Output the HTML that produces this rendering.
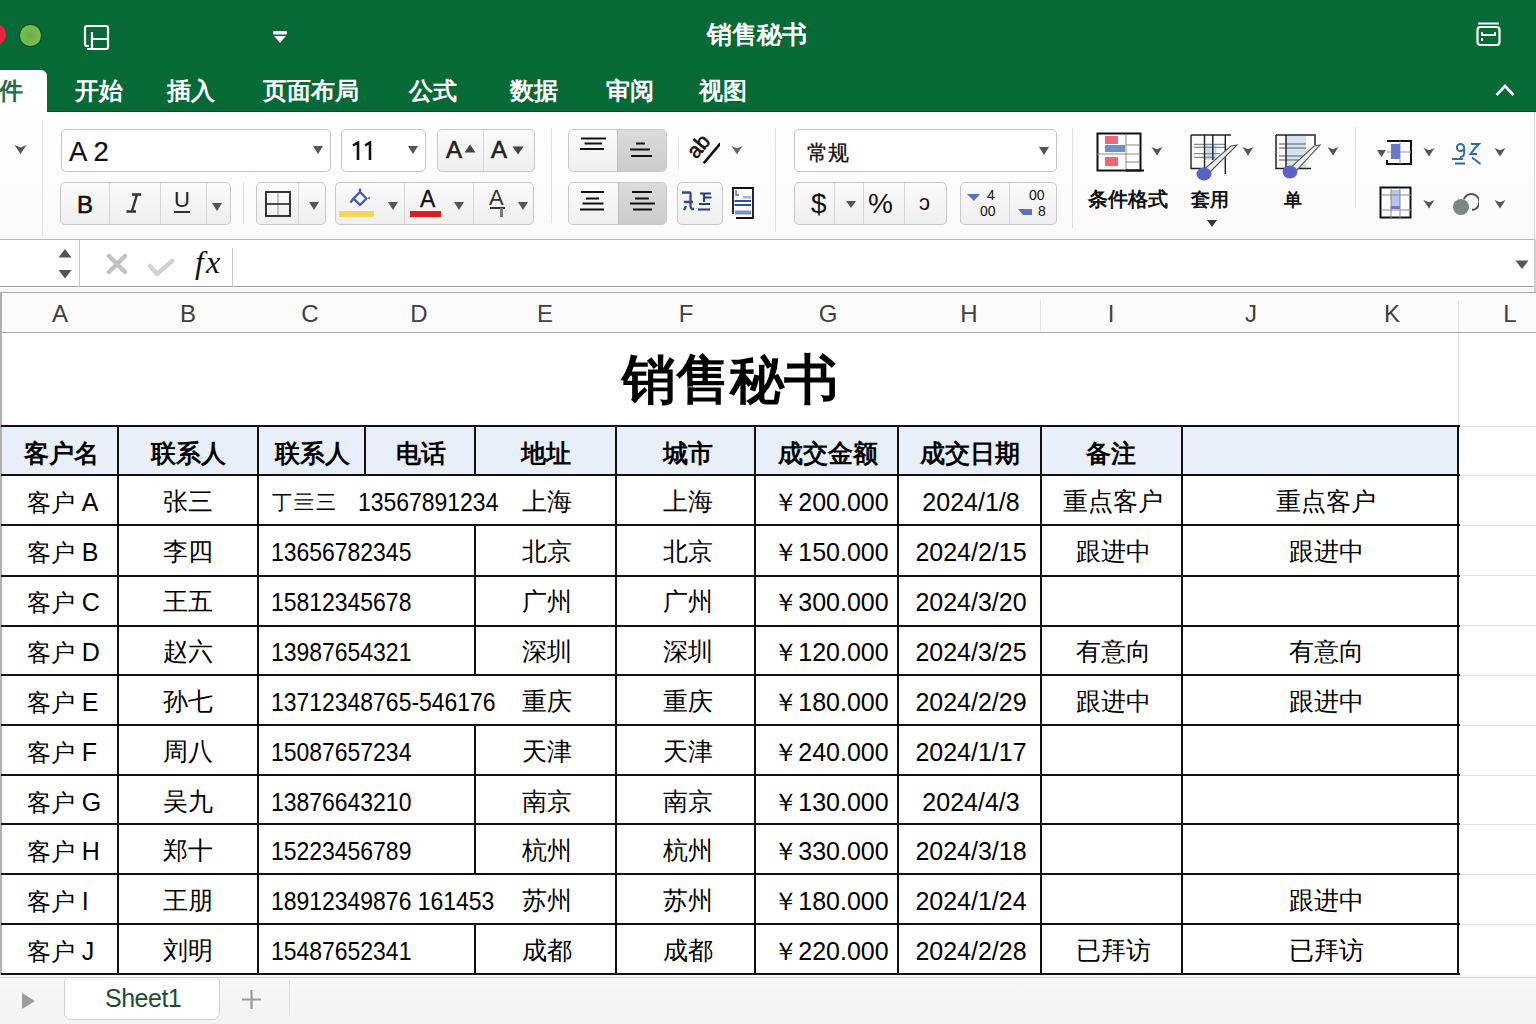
<!DOCTYPE html>
<html><head><meta charset="utf-8">
<style>
*{box-sizing:border-box;margin:0;padding:0}
html,body{width:1536px;height:1024px;overflow:hidden;background:#fff;font-family:"Liberation Sans",sans-serif;color:#000}
.a{position:absolute}
#top{left:0;top:0;width:1536px;height:112px;background:#066a37}
.tab{position:absolute;top:76px;color:#fff;font-weight:bold;font-size:24px;line-height:30px;white-space:nowrap}
#ribbon{left:0;top:112px;width:1536px;height:127px;background:linear-gradient(#fefefe,#fafafa)}
.box{position:absolute;border:1px solid #c4c4c4;border-radius:5px;background:#fff}
.grp{position:absolute;border:1px solid #c9c9c9;border-radius:5px;background:linear-gradient(#fbfbfb,#efefef)}
.dv{position:absolute;top:0;bottom:0;width:1px;background:#d6d6d6}
.sep{position:absolute;width:1px;background:#dcdcdc}
.rt{-webkit-text-stroke:0.6px currentColor}
.tri{position:absolute;width:0;height:0;border-left:5px solid transparent;border-right:5px solid transparent;border-top:8px solid #555}
#fbar{left:0;top:239px;width:1536px;height:48px;background:#fff;border-top:1px solid #b9b9b9;border-bottom:1px solid #9d9d9d}
#colh{left:0;top:292px;width:1536px;height:41px;background:#fbfbfb;border-top:1px solid #a8a8a8;border-bottom:1px solid #a8a8a8}
.ch{position:absolute;top:301px;font-size:24px;color:#404040;line-height:26px;transform:translateX(-50%)}
.hl{position:absolute;height:2px;background:#111}
.vl{position:absolute;width:2px;background:#111}
.t{position:absolute;font-size:25px;line-height:30px;white-space:nowrap;transform:translateX(-50%)}
.hd{position:absolute;font-size:24.5px;line-height:30px;font-weight:bold;white-space:nowrap;transform:translateX(-50%)}
.tl2{position:absolute;font-size:24px;line-height:30px;white-space:nowrap}
.tc{font-size:24.5px}
.tl{position:absolute;font-size:25.5px;line-height:30px;white-space:nowrap;transform:scaleX(0.90);transform-origin:0 0}
</style></head><body>

<!-- TITLE BAR -->
<div id="top" class="a"></div>
<div class="a" style="left:-15px;top:23.5px;width:21px;height:21px;border-radius:50%;background:#e8233f"></div>
<div class="a" style="left:19.5px;top:24.5px;width:21px;height:21px;border-radius:50%;background:radial-gradient(#6fae48,#80c452);box-shadow:0 0 0 1.2px #0b4f2a"></div>
<svg class="a" style="left:82px;top:24px" width="28" height="28" viewBox="0 0 28 28"><path d="M5 25 H24 Q26 25 26 23 V4 Q26 2 24 2 H5 Q3 2 3 4 V20 Q3 22 5 22 H7 M10 8 V24 M10 15 H26" fill="none" stroke="#fff" stroke-width="2.2" stroke-linejoin="round"/></svg>
<svg class="a" style="left:272px;top:30px" width="16" height="14" viewBox="0 0 16 14"><rect x="1" y="1" width="14" height="3.5" rx="1" fill="#fff"/><path d="M2 6 H14 L8 13 Z" fill="#fff"/></svg>
<div class="a" style="left:707px;top:19px;font-size:25px;line-height:30px;color:#fff;font-weight:bold;white-space:nowrap">销售秘书</div>
<svg class="a" style="left:1475px;top:21px" width="28" height="27" viewBox="0 0 28 27"><path d="M3 2.5 H24" stroke="#fff" stroke-width="2"/><rect x="2.5" y="6" width="22" height="18" rx="3" fill="none" stroke="#fff" stroke-width="2.2"/><path d="M7 11 V14 H20 V11 M7 17 V20" stroke="#fff" stroke-width="2" fill="none"/></svg>

<div class="a" style="left:47px;top:111px;width:1489px;height:1.5px;background:#074a27"></div>
<!-- TABS -->
<div class="a" style="left:0;top:70px;width:47px;height:43px;background:#fff;border-top-right-radius:6px"></div>
<div class="tab" style="left:-1px;color:#236d44">件</div>
<div class="tab" style="left:75px">开始</div>
<div class="tab" style="left:167px">插入</div>
<div class="tab" style="left:263px">页面布局</div>
<div class="tab" style="left:409px">公式</div>
<div class="tab" style="left:510px">数据</div>
<div class="tab" style="left:606px">审阅</div>
<div class="tab" style="left:699px">视图</div>
<svg class="a" style="left:1494px;top:82px" width="22" height="16" viewBox="0 0 22 16"><path d="M2.5 13 L11 4 L19.5 13" fill="none" stroke="#fff" stroke-width="2.6"/></svg>

<!-- RIBBON -->
<div id="ribbon" class="a"></div>
<div class="sep" style="left:42px;top:121px;height:115px;background:#e2e2e2"></div>
<svg class="a" style="left:14px;top:144px" width="13" height="11" viewBox="0 0 13 11"><path d="M0.5 1 L6.5 10 L12.5 1 L6.5 3.5 Z" fill="#555"/></svg>
<!-- font name -->
<div class="box" style="left:61px;top:129px;width:270px;height:43px"></div>
<div class="a rt" style="left:69px;top:137px;font-size:27.5px;line-height:30px;color:#111;white-space:nowrap;-webkit-text-stroke:0.2px #111">A 2</div>
<div class="tri" style="left:313px;top:146px"></div>
<!-- font size -->
<div class="box" style="left:341px;top:129px;width:85px;height:43px"></div>
<svg class="a" style="left:350px;top:141px" width="24" height="20" viewBox="0 0 24 20"><path d="M3 4.5 L8 1.5 V19 M15 4.5 L20 1.5 V19" fill="none" stroke="#111" stroke-width="2.6"/></svg>
<div class="tri" style="left:408px;top:146px"></div>
<!-- grow/shrink -->
<div class="grp" style="left:437px;top:129px;width:98px;height:43px"><div class="dv" style="left:45px"></div></div>
<div class="a rt" style="left:446px;top:135px;font-size:24px;line-height:30px;color:#222">A</div>
<svg class="a" style="left:464px;top:144px" width="12" height="9"><path d="M0.5 8.5 L6 0.5 L11.5 8.5Z" fill="#444"/></svg>
<div class="a rt" style="left:491px;top:135px;font-size:24px;line-height:30px;color:#222">A</div>
<svg class="a" style="left:512px;top:146px" width="12" height="9"><path d="M0.5 0.5 L6 8.5 L11.5 0.5Z" fill="#444"/></svg>
<!-- B I U -->
<div class="grp" style="left:60px;top:182px;width:171px;height:43px"><div class="dv" style="left:48px"></div><div class="dv" style="left:99px"></div><div class="dv" style="left:145px"></div></div>
<div class="a rt" style="left:77px;top:190px;font-size:24px;line-height:30px;color:#111">B</div>
<svg class="a" style="left:124px;top:192px" width="20" height="22" viewBox="0 0 20 22"><path d="M8 2.5 H17 M13 2.5 L8 19 M2.5 19.5 H12" fill="none" stroke="#333" stroke-width="2.4"/></svg>
<div class="a" style="left:174px;top:186px;font-size:22px;line-height:28px;color:#222">U</div>
<div class="a" style="left:174px;top:211px;width:16px;height:2px;background:#333"></div>
<div class="tri" style="left:212px;top:203px"></div>
<div class="sep" style="left:243px;top:183px;height:40px"></div>
<!-- borders -->
<div class="grp" style="left:256px;top:182px;width:70px;height:43px"><div class="dv" style="left:41px"></div></div>
<svg class="a" style="left:264px;top:190px" width="28" height="28" viewBox="0 0 28 28"><path d="M14 3 V25" stroke="#999" stroke-width="1"/><rect x="2" y="2" width="24" height="24" fill="none" stroke="#222" stroke-width="1.8"/><path d="M2 14 H26" stroke="#222" stroke-width="1.6"/></svg>
<div class="tri" style="left:309px;top:202px"></div>
<!-- fill/font color -->
<div class="grp" style="left:335px;top:182px;width:199px;height:43px"><div class="dv" style="left:68px"></div><div class="dv" style="left:137px"></div></div>
<svg class="a" style="left:349px;top:187px" width="22" height="22" viewBox="0 0 22 22"><path d="M11 1.5 V6 M4.5 11.5 L11 5 L17.5 11.5 L11 18 Z M4.5 11.5 L1.5 15.5" fill="none" stroke="#3b5fa8" stroke-width="2.4" stroke-linejoin="round"/><circle cx="20" cy="11" r="1" fill="#3b5fa8"/></svg>
<div class="a" style="left:339px;top:211px;width:35px;height:6px;background:#f6d55c;border-radius:1px"></div>
<div class="tri" style="left:388px;top:202px"></div>
<div class="a rt" style="left:420px;top:185px;font-size:23px;line-height:28px;color:#111;-webkit-text-stroke:0.3px #111">A</div>
<div class="a" style="left:410px;top:211px;width:31px;height:6px;background:#e01b1b"></div>
<div class="tri" style="left:454px;top:202px"></div>
<div class="a" style="left:489px;top:185px;font-size:22px;line-height:26px;color:#333">A</div>
<div class="a" style="left:490px;top:207px;width:15px;height:2px;background:#333"></div>
<div class="a" style="left:500px;top:208px;width:3px;height:9px;background:#777"></div>
<div class="tri" style="left:518px;top:202px"></div>
<div class="sep" style="left:551px;top:128px;height:95px;background:#e0e0e0"></div>
<!-- alignment -->
<div class="grp" style="left:568px;top:129px;width:99px;height:43px;overflow:hidden"><div class="a" style="left:48px;top:0;right:0;bottom:0;background:linear-gradient(#dcdcdc,#cbcbcb)"></div><div class="dv" style="left:48px;background:#bdbdbd"></div></div>
<svg class="a" style="left:578px;top:135px" width="30" height="18" viewBox="0 0 30 18"><path d="M3 3.5 H28 M6.5 8.5 H24 M2 14 H26" stroke="#111" stroke-width="2"/></svg>
<svg class="a" style="left:627px;top:140px" width="28" height="20" viewBox="0 0 28 20"><path d="M9 3.5 H18 M3 9.5 H23 M4 16 H25" stroke="#111" stroke-width="2"/></svg>
<div class="grp" style="left:568px;top:182px;width:99px;height:43px;overflow:hidden"><div class="a" style="left:49px;top:0;right:0;bottom:0;background:linear-gradient(#dcdcdc,#cbcbcb)"></div><div class="dv" style="left:49px;background:#bdbdbd"></div></div>
<svg class="a" style="left:578px;top:188px" width="30" height="26" viewBox="0 0 30 26"><path d="M3 4 H26 M8 10.5 H21 M4.5 15.5 H25.5 M2 21.5 H26" stroke="#111" stroke-width="2"/></svg>
<svg class="a" style="left:627px;top:188px" width="30" height="26" viewBox="0 0 30 26"><path d="M5 4 H25 M8 10.5 H22 M3 15.5 H28 M6 21.5 H25" stroke="#111" stroke-width="2"/></svg>
<div class="sep" style="left:678px;top:136px;height:35px;background:#e6e6e6"></div>
<svg class="a" style="left:686px;top:128px" width="34" height="38" viewBox="0 0 34 38"><g transform="rotate(-50 17 19)"><text x="3" y="22" font-family="Liberation Sans" font-size="21" fill="#111" stroke="#111" stroke-width="0.6">ab</text><path d="M5 30 H31" stroke="#111" stroke-width="2.6"/></g></svg>
<svg class="a" style="left:731px;top:145px" width="12" height="10" viewBox="0 0 12 10"><path d="M0.5 1 L6 9.5 L11.5 1 L6 3.2 Z" fill="#666"/></svg>
<div class="grp" style="left:677px;top:182px;width:46px;height:43px"></div>
<svg class="a" style="left:680px;top:190px" width="34" height="24" viewBox="0 0 34 24"><path d="M2 2.5 H10 Q11 3 10.5 5 V16 Q10.5 18 12 19 H14 M4 12 H13 M6 16 L4 20" fill="none" stroke="#2f4a86" stroke-width="2.3"/><path d="M20 3.5 H31 M24 3.5 V12 M24 7.5 H31.5 M19 14 H30 M18 19.5 H30" fill="none" stroke="#253f78" stroke-width="2.2"/></svg>
<svg class="a" style="left:731px;top:186px" width="25" height="34" viewBox="0 0 25 34"><path d="M2 28 V2 H22 V32 H5" fill="none" stroke="#111" stroke-width="1.8"/><path d="M5 4 V9 H8" stroke="#4a66a8" stroke-width="1.3" fill="none"/><rect x="12" y="10" width="8" height="2.5" fill="#9fb5e0"/><path d="M3.5 15 H20 M3.5 19 H20" stroke="#2d4f96" stroke-width="2"/><path d="M4 24.5 H20 V28.5 H4 Z" fill="#7890c8"/></svg>
<div class="sep" style="left:775px;top:128px;height:104px;background:#e0e0e0"></div>
<!-- number -->
<div class="box" style="left:794px;top:129px;width:263px;height:43px"></div>
<div class="a rt" style="left:807px;top:139px;font-size:20.5px;line-height:28px;color:#111;-webkit-text-stroke:0.3px #111">常规</div>
<div class="tri" style="left:1039px;top:147px"></div>
<div class="grp" style="left:794px;top:182px;width:153px;height:43px"><div class="dv" style="left:39px"></div><div class="dv" style="left:68px"></div><div class="dv" style="left:109px"></div></div>
<div class="a" style="left:811px;top:189px;font-size:28px;line-height:30px;color:#111">$</div>
<div class="tri" style="left:846px;top:201px;border-left-width:5px;border-right-width:5px;border-top-width:7px"></div>
<div class="a" style="left:868px;top:189px;font-size:28px;line-height:30px;color:#111">%</div>
<div class="a" style="left:919px;top:190px;font-size:22px;line-height:26px;color:#111">ɔ</div>
<div class="grp" style="left:960px;top:182px;width:97px;height:43px"><div class="dv" style="left:48px"></div></div>
<svg class="a" style="left:967px;top:193px" width="14" height="9"><path d="M0 1 L13 1 L7 8Z" fill="#5b6fbd"/></svg>
<div class="a" style="left:987px;top:188px;font-size:14px;line-height:14px;color:#111">4</div>
<div class="a" style="left:980px;top:204px;font-size:14px;line-height:14px;color:#111">00</div>
<div class="a" style="left:1029px;top:188px;font-size:14px;line-height:14px;color:#111">00</div>
<svg class="a" style="left:1018px;top:208px" width="15" height="8"><path d="M0 1 H14 V7 H5 Z" fill="#5b6fbd"/></svg>
<div class="a" style="left:1038px;top:204px;font-size:14px;line-height:14px;color:#111">8</div>
<div class="sep" style="left:1072px;top:128px;height:100px;background:#e0e0e0"></div>
<!-- styles -->
<svg class="a" style="left:1096px;top:132px" width="50" height="41" viewBox="0 0 50 41"><rect x="1.5" y="1.5" width="43" height="37" fill="#fff" stroke="#111" stroke-width="2"/><path d="M1 22 H44 M30 2 V38 M30 13 H44 M30 30 H44" stroke="#888" stroke-width="1"/><rect x="9" y="4" width="13" height="8" fill="#f06878"/><rect x="9" y="13" width="20" height="7" fill="#6e8fd0"/><rect x="9" y="25" width="13" height="9" fill="#f06878"/><path d="M30 38.5 H48" stroke="#111" stroke-width="2"/></svg>
<svg class="a" style="left:1151px;top:146px" width="12" height="10" viewBox="0 0 12 10"><path d="M0.5 1 L6 9.5 L11.5 1 L6 3.2 Z" fill="#555"/></svg>
<div class="a" style="left:1088px;top:186px;font-size:20px;line-height:26px;font-weight:bold;color:#111;white-space:nowrap">条件格式</div>
<svg class="a" style="left:1185px;top:128px" width="56" height="56" viewBox="0 0 56 56"><rect x="19.5" y="16" width="12" height="16" fill="#c9daf1"/><path d="M9 16.3 H40 M9 19.4 H40 M9 25.6 H35 M9 29.3 H30" stroke="#8c8c8c" stroke-width="1.3"/><path d="M6 7 H46 M6 7 V40.5 H19 M19.5 7 V40 M27.8 7 V32 M40.3 7 V46" fill="none" stroke="#222" stroke-width="1.4"/><path d="M52 17 L46 18 L16 44 L22 47 Z" fill="#eeeeee" stroke="#555" stroke-width="1.1"/><ellipse cx="19" cy="46" rx="7.5" ry="6.5" fill="#5a62c8"/></svg>
<svg class="a" style="left:1242px;top:146px" width="12" height="10" viewBox="0 0 12 10"><path d="M0.5 1 L6 9.5 L11.5 1 L6 3.2 Z" fill="#555"/></svg>
<div class="a" style="left:1191px;top:187px;font-size:19px;line-height:26px;font-weight:bold;color:#111;white-space:nowrap">套用</div>
<svg class="a" style="left:1207px;top:220px" width="10" height="8"><path d="M0 0 H10 L5 7Z" fill="#333"/></svg>
<svg class="a" style="left:1270px;top:128px" width="56" height="56" viewBox="0 0 56 56"><rect x="16" y="8" width="20" height="32" fill="#d3e2f4"/><path d="M9 16 H36 M9 20 H36 M9 28 H36 M9 32 H36" stroke="#8c8c8c" stroke-width="1.3"/><path d="M6 7 H45 V17 M6 7 V40.5 H41 M16 7 V40" fill="none" stroke="#222" stroke-width="1.5"/><path d="M50 17 L44 18 L17 43 L23 46 Z" fill="#eeeeee" stroke="#555" stroke-width="1.1"/><ellipse cx="20" cy="44" rx="7.5" ry="6.5" fill="#5a62c8"/></svg>
<svg class="a" style="left:1327px;top:146px" width="12" height="10" viewBox="0 0 12 10"><path d="M0.5 1 L6 9.5 L11.5 1 L6 3.2 Z" fill="#555"/></svg>
<div class="a" style="left:1284px;top:188px;font-size:18px;line-height:24px;font-weight:bold;color:#111;white-space:nowrap">单</div>
<div class="sep" style="left:1355px;top:127px;height:81px;background:#e0e0e0"></div>
<!-- cells -->
<svg class="a" style="left:1376px;top:140px" width="38" height="26" viewBox="0 0 38 26"><path d="M11 1 H35 V24 H11 V20" fill="none" stroke="#111" stroke-width="2"/><path d="M24 1 V24 M11 12 H35" stroke="#999" stroke-width="1"/><rect x="15" y="4" width="9" height="15" fill="#6a78c8"/><path d="M1 10 L10 10 L5.5 17Z" fill="#555"/></svg>
<svg class="a" style="left:1423px;top:147px" width="12" height="10" viewBox="0 0 12 10"><path d="M0.5 1 L6 9.5 L11.5 1 L6 3.2 Z" fill="#555"/></svg>
<svg class="a" style="left:1451px;top:142px" width="32" height="25" viewBox="0 0 32 25"><circle cx="9.5" cy="5.5" r="3.6" fill="none" stroke="#2f66b0" stroke-width="2"/><path d="M13.1 5.5 V11 Q13 15 9 15 M1 17 H12 M4 21.5 H14 M20 2 H28 Q23 7 19.5 12 H26 M21 15.5 L29.5 22" fill="none" stroke="#2f66b0" stroke-width="1.9"/></svg>
<svg class="a" style="left:1494px;top:147px" width="12" height="10" viewBox="0 0 12 10"><path d="M0.5 1 L6 9.5 L11.5 1 L6 3.2 Z" fill="#555"/></svg>
<svg class="a" style="left:1379px;top:186px" width="34" height="34" viewBox="0 0 34 34"><rect x="1.5" y="1.5" width="30" height="30" fill="#fff" stroke="#111" stroke-width="2"/><rect x="12" y="4" width="9" height="19" fill="#b8c6ea"/><path d="M2 9 H32 M2 24 H32 M12 2 V32 M21 2 V32" stroke="#888" stroke-width="1"/><rect x="12" y="20" width="9" height="3" fill="#6a78c8"/></svg>
<svg class="a" style="left:1423px;top:199px" width="12" height="10" viewBox="0 0 12 10"><path d="M0.5 1 L6 9.5 L11.5 1 L6 3.2 Z" fill="#555"/></svg>
<svg class="a" style="left:1451px;top:189px" width="28" height="28" viewBox="0 0 28 28"><path d="M13 10 A8 8 0 1 1 21 21" fill="none" stroke="#555" stroke-width="2"/><circle cx="10" cy="18" r="8" fill="#7d8589"/></svg>
<svg class="a" style="left:1494px;top:199px" width="12" height="10" viewBox="0 0 12 10"><path d="M0.5 1 L6 9.5 L11.5 1 L6 3.2 Z" fill="#555"/></svg>
<div class="sep" style="left:1534px;top:112px;height:127px;background:#d8d8d8"></div>


<!-- FORMULA BAR -->
<div id="fbar" class="a"></div>
<div class="a" style="left:79px;top:240px;width:1px;height:47px;background:#c8c8c8"></div>
<svg class="a" style="left:57px;top:247px" width="16" height="34" viewBox="0 0 16 34"><path d="M1.5 10.5 L8 2 L14.5 10.5Z M1.5 23 L8 31.5 L14.5 23Z" fill="#555"/></svg>
<svg class="a" style="left:105px;top:252px" width="24" height="24" viewBox="0 0 24 24"><path d="M4 4 L20 20 M20 4 L4 20" stroke="#c2c2c2" stroke-width="4.5" stroke-linecap="round"/></svg>
<svg class="a" style="left:147px;top:256px" width="28" height="22" viewBox="0 0 28 22"><path d="M3 10 L10 18 L25 5" fill="none" stroke="#d2d2d2" stroke-width="4.5" stroke-linecap="round" stroke-linejoin="round"/></svg>
<div class="a" style="left:195px;top:244px;font-family:'Liberation Serif',serif;font-style:italic;font-size:32px;line-height:36px;letter-spacing:2px;color:#111">fx</div>
<div class="a" style="left:232px;top:248px;width:1px;height:39px;background:#c8c8c8"></div>
<svg class="a" style="left:1515px;top:260px" width="14" height="10"><path d="M0.5 0.5 H13.5 L7 9Z" fill="#555"/></svg>
<div class="a" style="left:0;top:288px;width:1536px;height:4px;background:#f7f7f7"></div>
<div class="a" style="left:1534px;top:239px;width:1.5px;height:54px;background:#cfcfcf"></div>

<!-- COLUMN HEADERS -->
<div id="colh" class="a"></div>
<div class="ch" style="left:60px">A</div>
<div class="ch" style="left:188px">B</div>
<div class="ch" style="left:310px">C</div>
<div class="ch" style="left:419px">D</div>
<div class="ch" style="left:545px">E</div>
<div class="ch" style="left:686px">F</div>
<div class="ch" style="left:828px">G</div>
<div class="ch" style="left:969px">H</div>
<div class="ch" style="left:1111px">I</div>
<div class="ch" style="left:1251px">J</div>
<div class="ch" style="left:1392px">K</div>
<div class="ch" style="left:1510px">L</div>
<div class="a" style="left:1040px;top:300px;width:1px;height:32px;background:#e4e4e4"></div>
<div class="a" style="left:1458px;top:300px;width:1px;height:32px;background:#e4e4e4"></div>
<div class="a" style="left:0;top:292px;width:2px;height:683px;background:#b0b0b0"></div>

<!-- SHEET -->
<div class="a" style="left:1458px;top:333px;width:1px;height:93px;background:#dadada"></div>
<div class="a" style="left:1460px;top:426px;width:76px;height:1px;background:#e0e0e0"></div>
<div class="a" style="left:1460px;top:475px;width:76px;height:1px;background:#e0e0e0"></div>
<div class="a" style="left:1460px;top:525px;width:76px;height:1px;background:#e0e0e0"></div>
<div class="a" style="left:1460px;top:575px;width:76px;height:1px;background:#e0e0e0"></div>
<div class="a" style="left:1460px;top:625px;width:76px;height:1px;background:#e0e0e0"></div>
<div class="a" style="left:1460px;top:675px;width:76px;height:1px;background:#e0e0e0"></div>
<div class="a" style="left:1460px;top:725px;width:76px;height:1px;background:#e0e0e0"></div>
<div class="a" style="left:1460px;top:775px;width:76px;height:1px;background:#e0e0e0"></div>
<div class="a" style="left:1460px;top:824px;width:76px;height:1px;background:#e0e0e0"></div>
<div class="a" style="left:1460px;top:874px;width:76px;height:1px;background:#e0e0e0"></div>
<div class="a" style="left:1460px;top:924px;width:76px;height:1px;background:#e0e0e0"></div>


<div class="a" style="left:622px;top:343px;font-size:54px;line-height:72px;font-weight:bold;white-space:nowrap">销售秘书</div>

<div class="a" style="left:2px;top:427px;width:1456px;height:48px;background:#e9eff8"></div>
<!-- horizontal lines -->
<div class="hl" style="left:1px;top:425px;width:1459px"></div>
<div class="hl" style="left:1px;top:474px;width:1459px"></div>
<div class="hl" style="left:1px;top:524px;width:1459px"></div>
<div class="hl" style="left:1px;top:575px;width:1459px"></div>
<div class="hl" style="left:1px;top:625px;width:1459px"></div>
<div class="hl" style="left:1px;top:674px;width:1459px"></div>
<div class="hl" style="left:1px;top:724px;width:1459px"></div>
<div class="hl" style="left:1px;top:774px;width:1459px"></div>
<div class="hl" style="left:1px;top:823px;width:1459px"></div>
<div class="hl" style="left:1px;top:873px;width:1459px"></div>
<div class="hl" style="left:1px;top:923px;width:1459px"></div>
<div class="hl" style="left:1px;top:973px;width:1459px"></div>
<!-- vertical lines -->
<div class="vl" style="left:117px;top:425px;height:550px"></div>
<div class="vl" style="left:257px;top:425px;height:550px"></div>
<div class="vl" style="left:364px;top:425px;height:50px;width:1.5px"></div>
<div class="vl" style="left:474px;top:425px;height:50px"></div>
<div class="vl" style="left:474px;top:524px;height:151px"></div><div class="vl" style="left:474px;top:724px;height:150px"></div><div class="vl" style="left:474px;top:923px;height:52px"></div>
<div class="vl" style="left:615px;top:425px;height:550px"></div>
<div class="vl" style="left:754px;top:425px;height:550px"></div>
<div class="vl" style="left:897px;top:425px;height:550px"></div>
<div class="vl" style="left:1040px;top:425px;height:455px;width:1.5px"></div>
<div class="vl" style="left:1040px;top:880px;height:95px;width:1.5px"></div>
<div class="vl" style="left:1181px;top:425px;height:550px;width:1.5px"></div>
<div class="vl" style="left:1457px;top:425px;height:550px"></div>

<!-- header row -->
<div class="hd" style="left:61px;top:439px">客户名</div>
<div class="hd" style="left:188px;top:439px">联系人</div>
<div class="hd" style="left:312px;top:439px">联系人</div>
<div class="hd" style="left:421px;top:439px">电话</div>
<div class="hd" style="left:546px;top:439px">地址</div>
<div class="hd" style="left:688px;top:439px">城市</div>
<div class="hd" style="left:828px;top:439px">成交金额</div>
<div class="hd" style="left:970px;top:439px">成交日期</div>
<div class="hd" style="left:1111px;top:439px">备注</div>
<div class="tl2" style="left:27px;top:487px">客户 <span style="font-size:25px">A</span></div>
<div class="t tc" style="left:188px;top:487px">张三</div>
<div class="a" style="left:272px;top:487px;font-size:20px;line-height:30px;letter-spacing:2px;white-space:nowrap">丁亖三</div>
<div class="tl" style="left:358px;top:487px">13567891234</div>
<div class="t tc" style="left:547px;top:487px">上海</div>
<div class="t tc" style="left:688px;top:487px">上海</div>
<div class="t" style="left:831px;top:487px">￥200.000</div>
<div class="t" style="left:971px;top:487px">2024/1/8</div>
<div class="t tc" style="left:1113px;top:487px">重点客户</div>
<div class="t tc" style="left:1326px;top:487px">重点客户</div>
<div class="tl2" style="left:27px;top:537px">客户 <span style="font-size:25px">B</span></div>
<div class="t tc" style="left:188px;top:537px">李四</div>
<div class="tl" style="left:271px;top:537px">13656782345</div>
<div class="t tc" style="left:547px;top:537px">北京</div>
<div class="t tc" style="left:688px;top:537px">北京</div>
<div class="t" style="left:831px;top:537px">￥150.000</div>
<div class="t" style="left:971px;top:537px">2024/2/15</div>
<div class="t tc" style="left:1113px;top:537px">跟进中</div>
<div class="t tc" style="left:1326px;top:537px">跟进中</div>
<div class="tl2" style="left:27px;top:587px">客户 <span style="font-size:25px">C</span></div>
<div class="t tc" style="left:188px;top:587px">王五</div>
<div class="tl" style="left:271px;top:587px">15812345678</div>
<div class="t tc" style="left:547px;top:587px">广州</div>
<div class="t tc" style="left:688px;top:587px">广州</div>
<div class="t" style="left:831px;top:587px">￥300.000</div>
<div class="t" style="left:971px;top:587px">2024/3/20</div>
<div class="tl2" style="left:27px;top:637px">客户 <span style="font-size:25px">D</span></div>
<div class="t tc" style="left:188px;top:637px">赵六</div>
<div class="tl" style="left:271px;top:637px">13987654321</div>
<div class="t tc" style="left:547px;top:637px">深圳</div>
<div class="t tc" style="left:688px;top:637px">深圳</div>
<div class="t" style="left:831px;top:637px">￥120.000</div>
<div class="t" style="left:971px;top:637px">2024/3/25</div>
<div class="t tc" style="left:1113px;top:637px">有意向</div>
<div class="t tc" style="left:1326px;top:637px">有意向</div>
<div class="tl2" style="left:27px;top:687px">客户 <span style="font-size:25px">E</span></div>
<div class="t tc" style="left:188px;top:687px">孙七</div>
<div class="tl" style="left:271px;top:687px">13712348765-546176</div>
<div class="t tc" style="left:547px;top:687px">重庆</div>
<div class="t tc" style="left:688px;top:687px">重庆</div>
<div class="t" style="left:831px;top:687px">￥180.000</div>
<div class="t" style="left:971px;top:687px">2024/2/29</div>
<div class="t tc" style="left:1113px;top:687px">跟进中</div>
<div class="t tc" style="left:1326px;top:687px">跟进中</div>
<div class="tl2" style="left:27px;top:737px">客户 <span style="font-size:25px">F</span></div>
<div class="t tc" style="left:188px;top:737px">周八</div>
<div class="tl" style="left:271px;top:737px">15087657234</div>
<div class="t tc" style="left:547px;top:737px">天津</div>
<div class="t tc" style="left:688px;top:737px">天津</div>
<div class="t" style="left:831px;top:737px">￥240.000</div>
<div class="t" style="left:971px;top:737px">2024/1/17</div>
<div class="tl2" style="left:27px;top:787px">客户 <span style="font-size:25px">G</span></div>
<div class="t tc" style="left:188px;top:787px">吴九</div>
<div class="tl" style="left:271px;top:787px">13876643210</div>
<div class="t tc" style="left:547px;top:787px">南京</div>
<div class="t tc" style="left:688px;top:787px">南京</div>
<div class="t" style="left:831px;top:787px">￥130.000</div>
<div class="t" style="left:971px;top:787px">2024/4/3</div>
<div class="tl2" style="left:27px;top:836px">客户 <span style="font-size:25px">H</span></div>
<div class="t tc" style="left:188px;top:836px">郑十</div>
<div class="tl" style="left:271px;top:836px">15223456789</div>
<div class="t tc" style="left:547px;top:836px">杭州</div>
<div class="t tc" style="left:688px;top:836px">杭州</div>
<div class="t" style="left:831px;top:836px">￥330.000</div>
<div class="t" style="left:971px;top:836px">2024/3/18</div>
<div class="tl2" style="left:27px;top:886px">客户 <span style="font-size:25px">I</span></div>
<div class="t tc" style="left:188px;top:886px">王朋</div>
<div class="tl" style="left:271px;top:886px">18912349876 161453</div>
<div class="t tc" style="left:547px;top:886px">苏州</div>
<div class="t tc" style="left:688px;top:886px">苏州</div>
<div class="t" style="left:831px;top:886px">￥180.000</div>
<div class="t" style="left:971px;top:886px">2024/1/24</div>
<div class="t tc" style="left:1326px;top:886px">跟进中</div>
<div class="tl2" style="left:27px;top:936px">客户 <span style="font-size:25px">J</span></div>
<div class="t tc" style="left:188px;top:936px">刘明</div>
<div class="tl" style="left:271px;top:936px">15487652341</div>
<div class="t tc" style="left:547px;top:936px">成都</div>
<div class="t tc" style="left:688px;top:936px">成都</div>
<div class="t" style="left:831px;top:936px">￥220.000</div>
<div class="t" style="left:971px;top:936px">2024/2/28</div>
<div class="t tc" style="left:1113px;top:936px">已拜访</div>
<div class="t tc" style="left:1326px;top:936px">已拜访</div>

<!-- SHEET TABS -->
<div class="a" style="left:0;top:975px;width:1536px;height:49px;background:linear-gradient(#f8f8f8,#f3f3f3);border-top:2px solid #fafafa"></div><div class="a" style="left:0;top:976.5px;width:1536px;height:1px;background:#d6d6d6"></div>
<svg class="a" style="left:21px;top:992px" width="15" height="18"><path d="M1 1 L14 9 L1 17Z" fill="#9d9d9d"/></svg>
<div class="a" style="left:64px;top:977px;width:156px;height:43px;background:#fff;border:1px solid #d2d2d2;border-radius:5px 5px 7px 7px"></div>
<div class="a" style="left:105px;top:983px;font-size:25px;line-height:30px;color:#1d4f2e;letter-spacing:-0.5px">Sheet1</div>
<svg class="a" style="left:241px;top:989px" width="21" height="21"><path d="M10.5 1 V20 M1 10.5 H20" stroke="#9a9a9a" stroke-width="2.2"/></svg>
<div class="a" style="left:289px;top:980px;width:1px;height:36px;background:#dedede"></div>
</body></html>
